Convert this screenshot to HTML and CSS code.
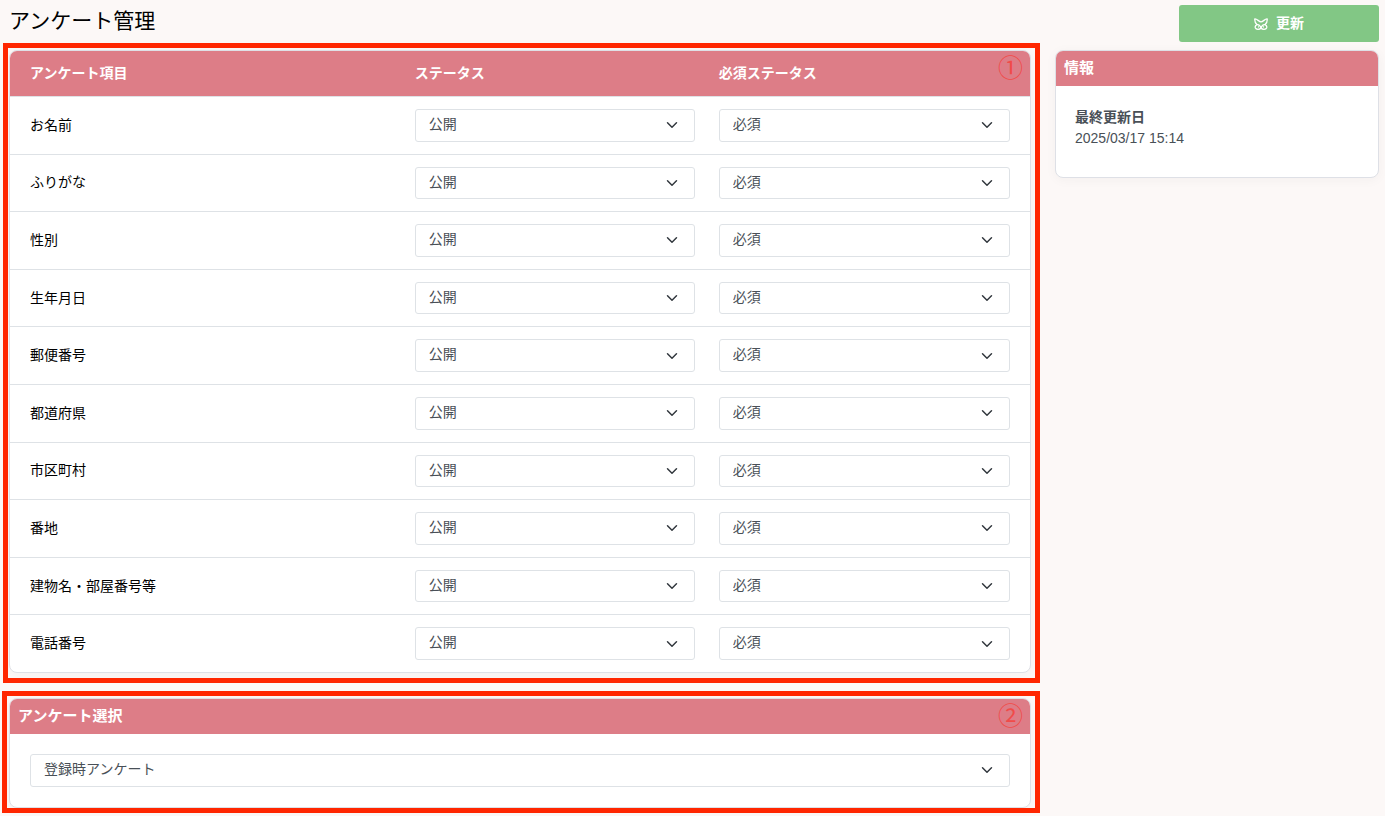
FILE: index.html
```html
<!DOCTYPE html>
<html lang="ja">
<head>
<meta charset="utf-8">
<meta name="viewport" content="width=device-width, initial-scale=1">
<title>アンケート管理</title>
<link rel="stylesheet" href="styles.css">
</head>
<body>
<header class="page-header">
  <h1 class="page-title">アンケート管理</h1>
  <button class="update-button" type="button">
    <svg class="update-icon" viewBox="0 0 14 14" aria-hidden="true">
      <path d="M.8 2C3 1.6 4.8 4.8 7 4.8S11 1.6 13.2 2C13.4 4.8 12.4 6.6 11 7.6C12.8 8.4 13 9.8 12.6 11C12 12.6 8.4 12.8 7 11C5.6 12.8 2 12.6 1.4 11C1 9.8 1.2 8.4 3 7.6C1.6 6.6 .6 4.8 .8 2Z"/>
      <path d="M3 7.6C5 7.2 6.2 8.6 7 11C7.8 8.6 9 7.2 11 7.6M4 9.8H5M9 9.8H10"/>
    </svg>
    更新
  </button>
</header>
<main class="layout">
  <div class="main-column">
    <section class="card framed">
      <table class="items">
        <colgroup><col class="col-item"><col class="col-status"><col></colgroup>
        <thead>
          <tr><th scope="col">アンケート項目</th><th scope="col">ステータス</th><th scope="col">必須ステータス</th></tr>
        </thead>
        <tbody>
          <tr><td>お名前</td><td><select class="select" aria-label="お名前 ステータス"><option>公開</option></select></td><td><select class="select" aria-label="お名前 必須ステータス"><option>必須</option></select></td></tr>
          <tr><td>ふりがな</td><td><select class="select" aria-label="ふりがな ステータス"><option>公開</option></select></td><td><select class="select" aria-label="ふりがな 必須ステータス"><option>必須</option></select></td></tr>
          <tr><td>性別</td><td><select class="select" aria-label="性別 ステータス"><option>公開</option></select></td><td><select class="select" aria-label="性別 必須ステータス"><option>必須</option></select></td></tr>
          <tr><td>生年月日</td><td><select class="select" aria-label="生年月日 ステータス"><option>公開</option></select></td><td><select class="select" aria-label="生年月日 必須ステータス"><option>必須</option></select></td></tr>
          <tr><td>郵便番号</td><td><select class="select" aria-label="郵便番号 ステータス"><option>公開</option></select></td><td><select class="select" aria-label="郵便番号 必須ステータス"><option>必須</option></select></td></tr>
          <tr><td>都道府県</td><td><select class="select" aria-label="都道府県 ステータス"><option>公開</option></select></td><td><select class="select" aria-label="都道府県 必須ステータス"><option>必須</option></select></td></tr>
          <tr><td>市区町村</td><td><select class="select" aria-label="市区町村 ステータス"><option>公開</option></select></td><td><select class="select" aria-label="市区町村 必須ステータス"><option>必須</option></select></td></tr>
          <tr><td>番地</td><td><select class="select" aria-label="番地 ステータス"><option>公開</option></select></td><td><select class="select" aria-label="番地 必須ステータス"><option>必須</option></select></td></tr>
          <tr><td>建物名・部屋番号等</td><td><select class="select" aria-label="建物名・部屋番号等 ステータス"><option>公開</option></select></td><td><select class="select" aria-label="建物名・部屋番号等 必須ステータス"><option>必須</option></select></td></tr>
          <tr><td>電話番号</td><td><select class="select" aria-label="電話番号 ステータス"><option>公開</option></select></td><td><select class="select" aria-label="電話番号 必須ステータス"><option>必須</option></select></td></tr>
        </tbody>
      </table>
      <span class="marker">①</span>
    </section>
    <section class="card framed">
      <h2 class="card-title"><label for="survey">アンケート選択</label></h2>
      <div class="card-body">
        <select class="select" id="survey"><option>登録時アンケート</option></select>
      </div>
      <span class="marker">②</span>
    </section>
  </div>
  <aside class="card">
    <h2 class="card-title">情報</h2>
    <dl class="card-body info">
      <dt>最終更新日</dt>
      <dd>2025/03/17 15:14</dd>
    </dl>
  </aside>
</main>
</body>
</html>
```
FILE: styles.css
```css
* { box-sizing: border-box; }

body {
  margin: 0;
  background: #fcf8f7;
  color: #000;
  font-family: "Liberation Sans", "Noto Sans CJK JP", sans-serif;
  font-size: 14px;
  line-height: 1.5;
}

.page-header {
  display: flex;
  justify-content: space-between;
  align-items: flex-start;
  padding: 5px 6px 8px 9px;
}

.page-title {
  margin: 0;
  font-size: 21px;
  font-weight: 400;
  line-height: 32px;
}

.update-button {
  display: flex;
  align-items: center;
  justify-content: center;
  gap: 8px;
  width: 200px;
  height: 37px;
  border: 0;
  border-radius: 3px;
  background: #82c785;
  color: #fff;
  font: inherit;
  font-weight: 700;
}

.update-icon {
  width: 14px;
  height: 14px;
  fill: none;
  stroke: #fff;
  stroke-width: 1.3;
  stroke-linejoin: round;
}

.layout {
  display: grid;
  grid-template-columns: minmax(0, 1fr) 324px;
  align-items: start;
  gap: 24px;
  padding: 0 6px 8px 9px;
}

.main-column {
  display: grid;
  gap: 25px;
}

.card {
  position: relative;
  border: 1px solid #dee0e6;
  border-radius: 8px;
  background: #fff;
  box-shadow: 0 2px 12px rgba(60, 50, 50, 0.04);
}

.framed::after {
  content: "";
  position: absolute;
  inset: -8px -10px -11px -7px;
  border: 5px solid #ff2600;
  pointer-events: none;
}

.framed + .framed::after { inset: -8px -10px -6px -8px; }

.marker {
  position: absolute;
  top: -1px;
  right: 7px;
  color: #ff2a20;
  font-family: "Noto Sans CJK JP", sans-serif;
  font-size: 25px;
  font-weight: 400;
  line-height: 32px;
  opacity: 0.6;
}

.card-title {
  margin: 0;
  padding: 6px 8px 8px;
  border-radius: 7px 7px 0 0;
  background: #dd7d87;
  color: #fff;
  font-size: 15px;
  line-height: 21px;
}

.card-body { padding: 20px; }

.items {
  width: 100%;
  table-layout: fixed;
  border-spacing: 0;
}

.col-item { width: 38.5%; }
.col-status { width: 29.8%; }

.items th,
.items td {
  padding: 12px;
  text-align: left;
}

.items th {
  background: #dd7d87;
  color: #fff;
  line-height: 21px;
}

.items td { border-top: 1px solid #dee2e6; }

.items th:first-child,
.items td:first-child { padding-left: 20px; }
.items th:last-child,
.items td:last-child { padding-right: 20px; }
.items th:first-child { border-top-left-radius: 7px; }
.items th:last-child { border-top-right-radius: 7px; }

.select {
  display: block;
  width: 100%;
  padding: 5px 36px 6px 13px;
  border: 1px solid #dee2e6;
  border-radius: 3px;
  appearance: none;
  background: #fff url("data:image/svg+xml,%3Csvg xmlns='http://www.w3.org/2000/svg' viewBox='0 0 16 16'%3E%3Cpath fill='none' stroke='%23343a40' stroke-linecap='round' stroke-linejoin='round' stroke-width='2' d='m2 5 6 6 6-6'/%3E%3C/svg%3E") no-repeat right 16px center / 12px 12px;
  color: #495057;
  font: inherit;
  line-height: 1.4;
}

.info {
  margin: 0;
  padding: 21px 19px 28px;
  color: #495057;
}

.info dt { font-weight: 700; }
.info dd { margin: 0; }
```
